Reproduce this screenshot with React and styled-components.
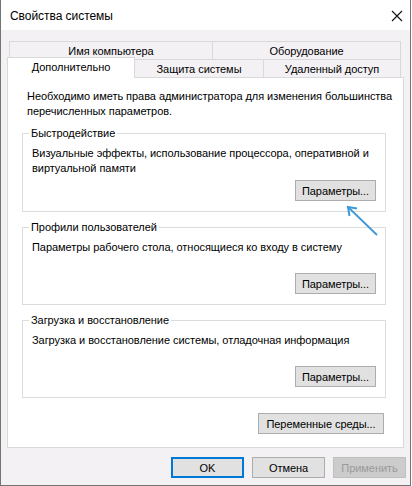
import styled, { createGlobalStyle } from "styled-components";

const Global = createGlobalStyle`
  html, body {
    margin: 0;
    padding: 0;
    background: #ffffff;
  }
  body {
    font-family: "Liberation Sans", Arial, sans-serif;
    font-size: 11px;
    letter-spacing: -0.05px;
    color: #000;
  }
`;

const Window = styled.div`
  box-sizing: border-box;
  width: 411px;
  height: 486px;
  display: flex;
  flex-direction: column;
  background: #f4f1f4;
  border: 1px solid #747474;
  border-top: none;
`;

const TitleBar = styled.div`
  height: 30px;
  flex: none;
  display: flex;
  align-items: center;
  justify-content: space-between;
  padding: 1px 7px 0 9px;
  box-sizing: border-box;
  background: #ffffff;
`;

const Title = styled.span`
  font-size: 12px;
`;

const Body = styled.div`
  flex: 1;
  padding: 11px 0 0 6px;
  display: flex;
  flex-direction: column;
`;

const TabRow = styled.div`
  display: flex;
  height: 18px;
  margin-left: ${(p) => p.$inset}px;
`;

const Tab = styled.div`
  box-sizing: border-box;
  width: ${(p) => p.$w}px;
  height: ${(p) => (p.$active ? 21 : 18)}px;
  margin-left: ${(p) => (p.$first ? 0 : -1)}px;
  margin-top: ${(p) => (p.$active ? -2 : 0)}px;
  border: 1px solid #d9d9d9;
  border-bottom: none;
  background: ${(p) => (p.$active ? "#ffffff" : "#f4f1f4")};
  display: flex;
  align-items: center;
  justify-content: center;
  padding-bottom: ${(p) => (p.$active ? 3 : 0)}px;
  position: relative;
  z-index: ${(p) => (p.$active ? 1 : 0)};
`;

const Panel = styled.div`
  box-sizing: border-box;
  position: relative;
  width: 397px;
  height: 371px;
  background: #ffffff;
  border: 1px solid #d9d9d9;
  padding: 11px 17px 0 14px;
  display: flex;
  flex-direction: column;
`;

const Intro = styled.p`
  margin: 0 0 7px 5px;
  line-height: 15px;
  white-space: nowrap;
`;

const Group = styled.fieldset`
  margin: 0 0 ${(p) => p.$gap}px 0;
  padding: 0 9px 10px 9px;
  border: 1px solid #dcdcdc;
  min-inline-size: 0;
  display: flex;
  flex-direction: column;
`;

const Legend = styled.legend`
  padding: 0 2px;
  margin-left: -3px;
  line-height: 15px;
`;

const GroupText = styled.div`
  margin-top: 5px;
  min-height: 29px;
  line-height: 15px;
  white-space: nowrap;
`;

const ButtonRow = styled.div`
  display: flex;
  justify-content: flex-end;
  gap: 8px;
  margin: ${(p) => p.$m || "0"};
`;

const Button = styled.button`
  box-sizing: border-box;
  width: ${(p) => p.$w}px;
  height: 21px;
  padding: 0;
  font-family: "Liberation Sans", Arial, sans-serif;
  font-size: 11px;
  letter-spacing: -0.05px;
  color: ${(p) => (p.disabled ? "#9a9a9a" : "#000")};
  background: ${(p) => (p.disabled ? "#cccccc" : "#e1e1e1")};
  border: ${(p) =>
    p.$primary ? "2px solid #0078d7" : p.disabled ? "1px solid #bfbfbf" : "1px solid #adadad"};
  border-radius: 0;
  margin-top: ${(p) => p.$mt || 0}px;
`;

const Arrow = styled.svg`
  position: absolute;
  left: 335px;
  top: 124px;
`;

const Footer = styled.div`
  display: flex;
  justify-content: flex-end;
  gap: 8px;
  padding: 9px 4px 0 0;
`;

function CloseIcon() {
  return (
    <svg width="12" height="12" viewBox="0 0 12 12">
      <path d="M1 1 L11 11 M11 1 L1 11" stroke="#111" strokeWidth="1.1" fill="none" />
    </svg>
  );
}

export default function App() {
  return (
    <>
      <Global />
      <Window>
        <TitleBar>
          <Title>Свойства системы</Title>
          <CloseIcon />
        </TitleBar>
        <Body>
          <TabRow $inset={2}>
            <Tab $first $w={204}>Имя компьютера</Tab>
            <Tab $w={189}>Оборудование</Tab>
          </TabRow>
          <TabRow $inset={0}>
            <Tab $first $active $w={128}>Дополнительно</Tab>
            <Tab $w={130}>Защита системы</Tab>
            <Tab $w={138}>Удаленный доступ</Tab>
          </TabRow>
          <Panel>
            <Intro>
              Необходимо иметь права администратора для изменения большинства
              <br />
              перечисленных параметров.
            </Intro>

            <Group $gap={8}>
              <Legend>Быстродействие</Legend>
              <GroupText>
                Визуальные эффекты, использование процессора, оперативной и
                <br />
                виртуальной памяти
              </GroupText>
              <ButtonRow>
                <Button $w={81} $mt={4}>Параметры...</Button>
              </ButtonRow>
            </Group>

            <Group $gap={8}>
              <Legend>Профили пользователей</Legend>
              <GroupText>Параметры рабочего стола, относящиеся ко входу в систему</GroupText>
              <ButtonRow>
                <Button $w={81} $mt={4}>Параметры...</Button>
              </ButtonRow>
            </Group>

            <Group $gap={15}>
              <Legend>Загрузка и восстановление</Legend>
              <GroupText>Загрузка и восстановление системы, отладочная информация</GroupText>
              <ButtonRow>
                <Button $w={81} $mt={4}>Параметры...</Button>
              </ButtonRow>
            </Group>

            <ButtonRow $m="0 2px 0 0">
              <Button $w={126}>Переменные среды...</Button>
            </ButtonRow>

            <Arrow width="40" height="40" viewBox="0 0 40 40">
              <path d="M5 5 L34 33" stroke="#3d9ad8" strokeWidth="1.8" fill="none" />
              <path d="M14 6.5 L5 5 L6.5 14" stroke="#3d9ad8" strokeWidth="2" fill="none" />
            </Arrow>
          </Panel>
          <Footer>
            <Button $primary $w={73}>OK</Button>
            <Button $w={73}>Отмена</Button>
            <Button disabled $w={73}>Применить</Button>
          </Footer>
        </Body>
      </Window>
    </>
  );
}
